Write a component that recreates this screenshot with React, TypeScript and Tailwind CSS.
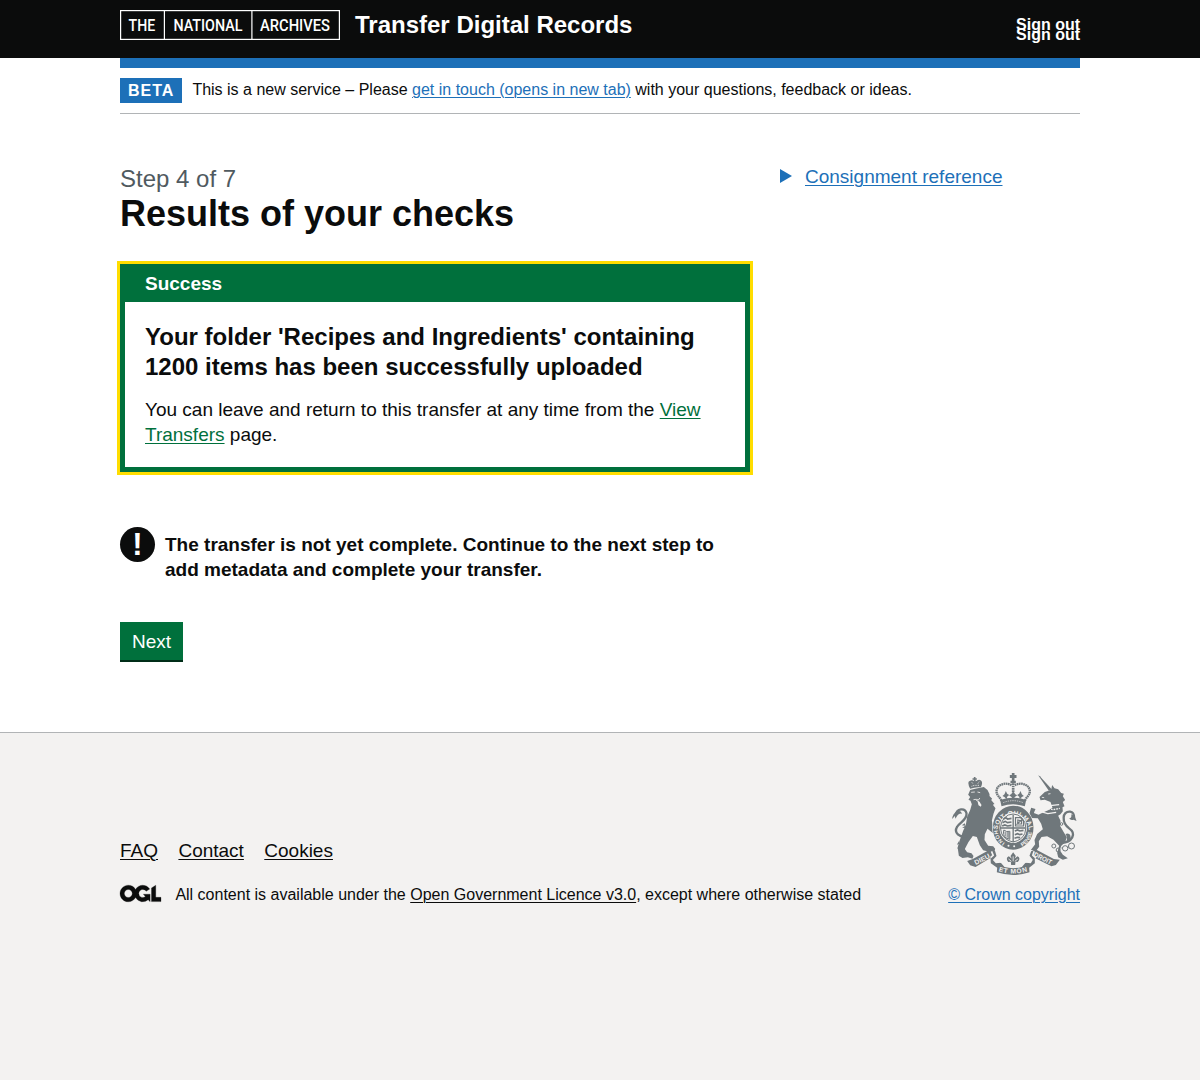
import React from "react";

function ArchivesLogo() {
  return (
    <svg width="220" height="30" viewBox="0 0 220 30" aria-label="The National Archives" className="block">
      <g fill="none" stroke="#fff" strokeWidth="1.2">
        <rect x=".6" y=".6" width="218.8" height="28.8" />
        <path d="M44.4 0V30M131.9 0V30" />
      </g>
      <g fill="#fff" fontFamily="Roboto" fontSize="16.3" fontWeight="500">
        <text x="8.6" y="21" textLength="26.6" lengthAdjust="spacingAndGlyphs">THE</text>
        <text x="53.4" y="21" textLength="69" lengthAdjust="spacingAndGlyphs">NATIONAL</text>
        <text x="140" y="21" textLength="70" lengthAdjust="spacingAndGlyphs">ARCHIVES</text>
      </g>
    </svg>
  );
}

function Crest() {
  return (
    <svg width="125" height="102" viewBox="21.5 15 375 306" className="block overflow-visible" fill="#6f777b" stroke="none">
      <defs>
        <path id="garter" d="M159 207A48 51 0 1 1 251 207" />
        <path id="garter-left" d="M148 188A57 57 0 0 0 178 236" />
        <path id="garter-right" d="M232 236A57 57 0 0 0 262 188" />
        <path id="motto" d="M157 308Q205 325 254 308" />
      </defs>

      {/* crown */}
      <path d="M201 15h8v6h6v9h-6v8h4v8h-16v-8h4v-8h-6v-9h6z" />
      <g fill="none" stroke="#6f777b">
        <path d="M200 52C182 40 154 51 155 71C156 84 167 88 170 99M210 52C228 40 256 51 255 71C254 84 243 88 240 99" strokeWidth="7" strokeDasharray="5 1.5" />
        <path d="M205 46V78" strokeWidth="8" strokeDasharray="5 2" />
      </g>
      <path d="M166 96Q205 82 244 96L240 115Q205 103 170 115Z" />
      <path d="M205 70l5 8 7 4-7 5-5 8-5-8-7-5 7-4zM183 69l4 8 6 4-6 5-2 8-6-7-6-3 6-5zM227 69l-4 8-6 4 6 5 2 8 6-7 6-3-6-5z" />
      <path d="M175 104Q205 92 235 104" fill="none" stroke="#f3f2f1" strokeWidth="2" strokeDasharray="4 3" />

      {/* lion */}
      <path d="M76 62Q65 40 76 38Q83 35 88 40L87 35h-4v-4h4v-4h5v4h4v4h-4l1 5Q102 31 109 38Q115 43 108 58Q92 56 76 62Z" />
      <path d="M80 55l9-3 14 0M81 43l4 5M103 41l-4 6" fill="none" stroke="#f3f2f1" strokeWidth="2.500" strokeDasharray="3 2" />
      <path d="M76 66L91 62L117 57L128 66L134 78L134 84L142 92L139 96L149 108L144 110L152 121L146 137L141 158L145 179L157 180L164 186L158 194L143 194L128 182L120 199L119 216L130 233L145 235L151 242L149 251L140 247L127 250L115 247L105 232L96 207L84 204L71 222L60 243L67 253L80 256L86 264L83 272L69 268L53 270L42 263L39 242L44 219L55 188L63 171L67 146L76 126L81 109L77 98L71 95L76 87L70 80Z" />
      <path d="M79 73l11-1M98 72l8 2M86 95l8-1 7 2 4-6M94 97l7 3 3 6" fill="none" stroke="#f3f2f1" strokeWidth="2.500" />
      <path d="M98 99l6 2 6 10-2 5-7-4z" fill="#f3f2f1" />
      <path d="M69 205C43 210 26 194 37 176C43 164 68 155 65 136C61 118 35 121 34 140" fill="none" stroke="#6f777b" strokeWidth="7" />
      <path d="M22 153Q23 138 36 129Q48 126 52 137Q44 134 37 143L32 152L30 144Z" />
      <path d="M43 218l-7 12 6-2-5 14 7-3M60 166l-9 6 10 1-9 7 12-1" />

      {/* unicorn */}
      <path d="M280 22L285 25L322 65L312 68Z" />
      <path d="M319 65L322 51L329 61L340 64L349 75L357 77L354 85L361 96L354 102L359 115L353 118L354 130L347 139L340 143L347 158L346 174L355 190L366 208L361 222L349 234L345 247L354 260L369 271L354 275L340 268L337 255L343 233L326 215L307 205L290 207L282 220L283 236L275 247L258 246L271 229L269 216L277 198L294 184L289 167L279 151L259 150L254 136L259 119L272 123L267 135L281 140L296 133L310 127L323 119L317 102L300 95L287 97L284 87L300 72Z" />
      <path d="M310 78l7-1M291 88l7 1" fill="none" stroke="#f3f2f1" strokeWidth="2.500" />
      <path d="M299 109L316 113L343 110M285 130L309 137L334 133" fill="none" stroke="#f3f2f1" strokeWidth="4" />
      <path d="M289 112L303 120L325 125L345 121" fill="none" stroke="#f3f2f1" strokeWidth="4" strokeDasharray="5 3" />
      <path d="M350 225C382 223 396 197 373 181C350 164 351 129 376 131C385 132 388 140 388 151" fill="none" stroke="#6f777b" strokeWidth="7" />
      <path d="M379 139Q391 143 395 159L386 155Q378 159 373 151Q382 150 379 139ZM362 198Q380 192 377 216L365 223Q369 207 362 198Z" />
      <g fill="none" stroke="#6f777b" strokeWidth="3">
        <circle cx="327" cy="234" r="6" /><circle cx="340" cy="246" r="6" /><circle cx="361" cy="241" r="8" /><circle cx="380" cy="234" r="9" />
        <circle cx="350" cy="168" r="4" />
        <path d="M350 240h4M368 238l4-1" />
      </g>

      {/* garter */}
      <ellipse cx="205" cy="179" rx="63" ry="68" fill="#f3f2f1" />
      <ellipse cx="205" cy="179" rx="51" ry="56" fill="none" stroke="#6f777b" strokeWidth="20" />
      <g fill="#f3f2f1" fontFamily="Liberation Sans" fontSize="19" fontWeight="700" aria-hidden="true">
        <text><textPath href="#garter" startOffset="22" textLength="142">SOIT·QUI·MAL</textPath></text>
        <text fontSize="16"><textPath href="#garter-left" textLength="54">HONI</textPath></text>
        <text fontSize="16"><textPath href="#garter-right" textLength="54">PENSE</textPath></text>
      </g>
      <circle cx="191" cy="233" r="3" fill="#f3f2f1" />
      <circle cx="208" cy="235" r="3" fill="#f3f2f1" />

      {/* quartered shield */}
      <ellipse cx="205" cy="180" rx="40" ry="44" fill="#f3f2f1" />
      <path d="M167 180A38 42 0 0 1 243 180L240 196Q232 216 205 222Q178 216 170 196Z" fill="none" stroke="#6f777b" strokeWidth="3" />
      <path d="M205 140v82M168 180h74" stroke="#6f777b" strokeWidth="4" />
      <g fill="none" stroke="#6f777b" strokeWidth="5">
        <path d="M176 153l7-4 5 4 12-2M173 164l8-4 7 4 12-2M172 174l8-3 8 3 12-2M210 189l8-3 7 3 11-2M210 200l8-3 7 3 8-2M209 211l9-3 8 1" />
        <path d="M212 149h15l9 10v15h-24zM219 156v12h11v-9zM215 170l15-14" strokeWidth="3.500" />
        <path d="M177 186l-2 14q7 13 20 14V190q-10 3-18-4M181 191v14M187 192v17M192 192v20" strokeWidth="3" />
      </g>

      {/* ribbons */}
      <path d="M67 279L84 273L137 244L151 250L155 264L144 276L153 286L168 284L179 297Q205 304 231 297L242 284L258 286L264 275L254 263L259 250L272 244L327 273L345 275L333 291L320 295L270 270L270 286L253 299L254 313Q205 329 156 313L157 299L138 286L137 270L92 297L76 292Z" />
      <path d="M140 250L145 262L137 269M268 250L264 262L273 270M149 276L162 277L169 283M261 276L248 277L241 283" fill="none" stroke="#f3f2f1" strokeWidth="5" />
      <path d="M205 253L213 264L209 272L218 265Q229 270 219 282L212 281L211 291H199L198 281L190 282Q181 270 192 265L201 272L197 264Z" />
      <path d="M205 265v15M191 273l9 7M219 273l-9 7" fill="none" stroke="#f3f2f1" strokeWidth="2.500" />
      <g fill="#f3f2f1" fontFamily="Liberation Sans" fontSize="20" fontWeight="700">
        <text x="93" y="291" textLength="49" lengthAdjust="spacingAndGlyphs" transform="rotate(-27 93 291)">DIEU</text>
        <text><textPath href="#motto" startOffset="4" textLength="88">ET MON</textPath></text>
        <text x="265" y="264" textLength="58" lengthAdjust="spacingAndGlyphs" transform="rotate(27 265 264)">DROIT</text>
      </g>
    </svg>
  );
}

export default function App() {
  return (
    <div className="min-h-[1080px] flex flex-col bg-white text-[#0b0c0c] antialiased" style={{ fontFamily: '"Liberation Sans", Arial, sans-serif' }}>
      <header className="h-[58px] bg-[#0b0c0c] text-white">
        <div className="mx-auto flex w-[960px] pt-[10px]">
          <ArchivesLogo />
          <a href="#" className="ml-[15px] text-[24px] leading-[30px] font-bold">Transfer Digital Records</a>
          <div className="ml-auto pt-[10px] text-[16px] leading-[10px] font-bold">
            <a href="#" className="block">Sign out</a>
            <a href="#" className="block">Sign out</a>
          </div>
        </div>
      </header>
      <div className="mx-auto w-[960px]">
        <div className="h-[10px] bg-[#1d70b8]" />
        <div className="flex h-[46px] border-b border-[#b1b4b6] pt-[10px]">
          <strong className="h-[25px] w-[62px] bg-[#1d70b8] pl-2 text-[16px] leading-[25px] tracking-[1px] text-white">BETA</strong>
          <p className="ml-[10.4px] text-[16px] leading-[23px]">
            This is a new service – Please{" "}
            <a href="#" className="text-[#1d70b8] underline decoration-1 underline-offset-[1.6px]">get in touch (opens in new tab)</a>{" "}
            with your questions, feedback or ideas.
          </p>
        </div>
        <main className="flex h-[618px] gap-[30px] pt-[50px]">
          <div className="w-[630px]">
            <span className="block text-[24px] leading-[30px] text-[#505a5f]">Step 4 of 7</span>
            <h1 className="text-[36px] leading-[40px] font-bold">Results of your checks</h1>
            <section className="mt-[30px] border-[5px] border-[#00703c] outline-[3px] outline-[#ffdd00]">
              <h2 className="h-[33px] bg-[#00703c] px-5 pt-[2px] text-[19px] leading-[25px] font-bold text-white">Success</h2>
              <div className="p-5">
                <h3 className="mb-[15px] text-[24px] leading-[30px] font-bold">
                  Your folder 'Recipes and Ingredients' containing 1200 items has been successfully uploaded
                </h3>
                <p className="text-[19px] leading-[25px]">
                  You can leave and return to this transfer at any time from the{" "}
                  <a href="#" className="text-[#00703c] underline decoration-1 underline-offset-[1.9px]">View Transfers</a> page.
                </p>
              </div>
            </section>
            <div className="mt-[55px] flex gap-[10px]">
              <span className="flex h-[35px] w-[35px] shrink-0 items-center justify-center rounded-full bg-[#0b0c0c] text-[31px] leading-[35px] font-bold text-white">!</span>
              <strong className="pt-[5px] text-[19px] leading-[25px]">
                The transfer is not yet complete. Continue to the next step to add metadata and complete your transfer.
              </strong>
            </div>
            <button className="mt-10 block h-[38px] w-[63px] bg-[#00703c] text-[19px] leading-[40px] text-white shadow-[0_2px_0_#002d18]">Next</button>
          </div>
          <div className="flex h-[25px] items-center text-[19px] leading-[25px] text-[#1d70b8]">
            <span className="mr-[13px] mb-[2px] h-0 w-0 border-y-[7px] border-l-[12px] border-y-transparent border-l-[#1d70b8]" />
            <a href="#" className="underline decoration-1 underline-offset-[1.9px]">Consignment reference</a>
          </div>
        </main>
      </div>
      <footer className="flex-1 border-t border-[#b1b4b6] bg-[#f3f2f1]">
        <div className="mx-auto flex w-[960px] items-end justify-between pt-10">
          <div>
            <nav className="mb-[22px] flex gap-[20.4px] text-[19px] leading-[25px]">
              <a href="#" className="underline decoration-1 underline-offset-[1.9px]">FAQ</a>
              <a href="#" className="underline decoration-1 underline-offset-[1.9px]">Contact</a>
              <a href="#" className="underline decoration-1 underline-offset-[1.9px]">Cookies</a>
            </nav>
            <div className="flex text-[16px] leading-5">
              <svg width="41" height="17" viewBox="0 0 483.2 195.7" className="mr-[14.4px] overflow-visible">
                <path d="M421.500 142.800V.1l-50.700 32.300v161.100h112.400v-50.700zm-122.300-9.600A47.120 47.120 0 0 1 221 97.800c0-26 21.100-47.100 47.100-47.100 16.700 0 31.400 8.700 39.700 21.800l42.700-27.200A97.630 97.630 0 0 0 268.100 0c-36.500 0-68.300 20.100-85.100 49.700A98 98 0 0 0 97.800 0C43.900 0 0 43.900 0 97.800s43.900 97.800 97.800 97.800c36.500 0 68.300-20.100 85.100-49.700a97.760 97.760 0 0 0 149.600 25.400l19.400 22.200h3v-87.800h-80l24.300 27.500zM97.800 145c-26 0-47.100-21.100-47.100-47.100s21.100-47.100 47.100-47.100 47.100 21.100 47.100 47.100S123.800 145 97.800 145" fill="#0b0c0c" stroke="#0b0c0c" strokeWidth="3" />
              </svg>
              <p>
                All content is available under the{" "}
                <a href="#" className="underline decoration-1 underline-offset-[1.6px]">Open Government Licence v3.0</a>, except where otherwise stated
              </p>
            </div>
          </div>
          <a href="#" className="flex flex-col items-center text-[16px] leading-5 text-[#1d70b8]">
            <Crest />
            <span className="mt-[10px] underline decoration-1 underline-offset-[1.6px]">© Crown copyright</span>
          </a>
        </div>
      </footer>
    </div>
  );
}
